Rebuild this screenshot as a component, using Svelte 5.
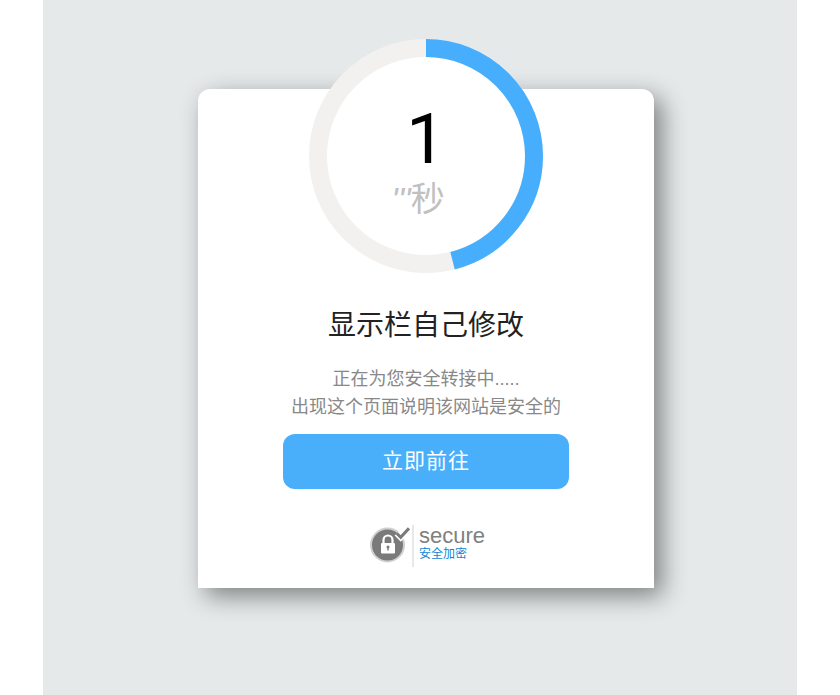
<script>
  let seconds = 1;
  const radius = 108;
  const circumference = 2 * Math.PI * radius;
  const progress = 0.46;
</script>

<div class="page">
  <div class="card">
    <div class="timer">
      <svg class="ring" width="234" height="234" viewBox="0 0 234 234">
        <circle cx="117" cy="117" r={radius} fill="#fff" stroke="#f2f1f0" stroke-width="18" />
        <circle
          cx="117"
          cy="117"
          r={radius}
          fill="none"
          stroke="#46aefc"
          stroke-width="18"
          stroke-dasharray={`${circumference * progress} ${circumference}`}
          transform="rotate(-90 117 117)"
        />
      </svg>
      <div class="count">
        <div class="num">{seconds}</div>
        <div class="unit"><span class="ticks">'''</span>秒</div>
      </div>
    </div>

    <h1>显示栏自己修改</h1>
    <p class="desc">正在为您安全转接中.....<br />出现这个页面说明该网站是安全的</p>
    <button class="go">立即前往</button>

    <div class="secure">
      <svg class="badge" width="40" height="40" viewBox="0 0 40 40">
        <circle cx="17.5" cy="19" r="16.5" fill="#7a7a7a" stroke="#cfcfcf" stroke-width="2" />
        <path d="M13.5 17v-3a4.5 4.5 0 0 1 9 0v3" fill="none" stroke="#fff" stroke-width="2.2" />
        <rect x="11" y="17" width="14" height="10.5" rx="1" fill="#fff" />
        <circle cx="18" cy="21" r="1.5" fill="#7a7a7a" />
        <rect x="17.3" y="21" width="1.4" height="3.5" fill="#7a7a7a" />
        <path d="M26.7 7.3l4 4 8.3-9" fill="none" stroke="#fff" stroke-width="6" />
        <path d="M26.7 7.3l4 4 8.3-9" fill="none" stroke="#7a7a7a" stroke-width="3" />
      </svg>
      <div class="secure-text">
        <div class="en">secure</div>
        <div class="cn">安全加密</div>
      </div>
    </div>
  </div>
</div>

<style>
  :global(body) {
    margin: 0;
    background: #fff;
  }

  .page {
    box-sizing: border-box;
    width: 754px;
    height: 695px;
    margin: 0 auto;
    padding: 89px 0 0 12px;
    background: #e5e9ea;
    display: flex;
    justify-content: center;
    align-items: flex-start;
    overflow: hidden;
    font-family: "Liberation Sans", "Noto Sans CJK SC", sans-serif;
  }

  .card {
    box-sizing: border-box;
    width: 456px;
    height: 499px;
    background: #fff;
    border-radius: 12px 12px 0 0;
    box-shadow: 8px 8px 24px rgba(0, 0, 0, 0.45);
    display: flex;
    flex-direction: column;
    align-items: center;
    text-align: center;
  }

  .timer {
    position: relative;
    width: 234px;
    height: 234px;
    margin-top: -50px;
    flex-shrink: 0;
  }

  .ring {
    display: block;
  }

  .count {
    position: absolute;
    inset: 0;
    display: flex;
    flex-direction: column;
    align-items: center;
  }

  .num {
    margin-top: 60px;
    font-family: Roboto, sans-serif;
    font-size: 70px;
    line-height: 80px;
    color: #000;
  }

  .unit {
    margin-right: 16px;
    font-size: 34px;
    line-height: 40px;
    color: #c0c0c0;
  }

  .ticks {
    font-style: italic;
  }

  h1 {
    margin: 33px 0 0;
    font-size: 28px;
    line-height: 40px;
    font-weight: 400;
    color: #222;
  }

  .desc {
    margin: 19px 0 0;
    font-size: 18px;
    line-height: 28px;
    color: #888;
  }

  .go {
    width: 286px;
    height: 55px;
    margin-top: 13px;
    padding: 0 0 6px;
    border: none;
    border-radius: 12px;
    background: #4aaffb;
    color: #fff;
    font-family: inherit;
    font-size: 21px;
    letter-spacing: 1px;
    cursor: pointer;
  }

  .secure {
    display: flex;
    align-items: center;
    margin: 36px 0 0 3px;
  }

  .badge {
    display: block;
    margin-right: 2px;
  }

  .secure-text {
    border-left: 2px solid #e8e8e8;
    padding-left: 5px;
    height: 42px;
    text-align: left;
  }

  .en {
    font-size: 22px;
    line-height: 22px;
    color: #808080;
  }

  .cn {
    font-size: 12px;
    line-height: 14px;
    color: #0f85d6;
  }
</style>
